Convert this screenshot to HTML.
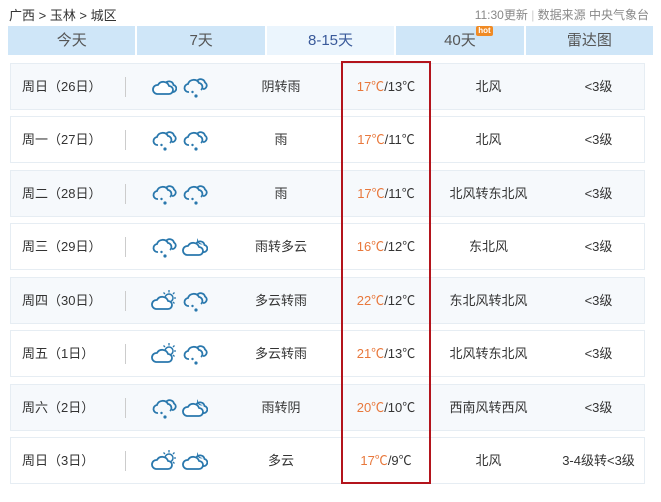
<!DOCTYPE html>
<html><head><meta charset="utf-8"><style>
*{margin:0;padding:0;box-sizing:border-box}
body{width:661px;height:502px;background:#fff;font-family:"Liberation Sans","Noto Sans CJK SC",sans-serif;color:#333;position:relative;overflow:hidden}
.crumb{position:absolute;left:9px;top:5px;font-size:13px;color:#333}
.src{position:absolute;right:12px;top:6px;font-size:12px;color:#888}
.tabs{position:absolute;left:8px;top:26px;height:29px;display:flex;width:645px}
.tab{flex:1;background:#cfe6f8;margin-right:2px;text-align:center;font-size:15px;line-height:29px;color:#555;position:relative}
.tab:last-child{margin-right:0}
.tab.on{background:#ebf5fd;color:#3a5a9a}
.hot{position:absolute;left:80px;top:0px;background:#f08a24;color:#fff;font-size:8px;line-height:10px;padding:0 2px;border-radius:2px;font-weight:bold;font-style:normal}
.row{position:absolute;left:10px;width:635px;height:47px;border:1px solid #e6edf3;background:#f6f9fc;font-size:13px}
.row span{position:absolute;top:0;line-height:45px}
.d{left:11px}
.sep{left:114px;top:13px!important;width:1px;height:20px;background:#ccc}
.ic{position:absolute;top:11px}
.w{left:205px;width:130px;text-align:center}
.t{left:320px;width:110px;text-align:center}
.t b{font-weight:normal;color:#e8783c}
.f{left:420px;width:115px;text-align:center}
.l{left:530px;width:115px;text-align:center}
.box{position:absolute;left:341px;top:61px;width:90px;height:423px;border:2px solid #b3141c}
</style></head><body>
<svg width="0" height="0" style="position:absolute">
<defs>
<symbol id="cl" viewBox="0 0 26 22"><path d="M14 9A4.5 4.5 0 0 1 22.5 10A3.5 3.5 0 0 1 21 17" fill="none" stroke="#2a78ad" stroke-width="1.8"/><path d="M6 19H18A4 4 0 0 0 18 11A6 6 0 0 0 7 10A4.5 4.5 0 0 0 6 19Z" fill="#fff" stroke="#2a78ad" stroke-width="1.8" stroke-linejoin="round"/></symbol>
<symbol id="rn" viewBox="0 0 26 24"><path d="M15 6A4.5 4.5 0 0 1 23 7.5A3.5 3.5 0 0 1 21 14" fill="none" stroke="#2a78ad" stroke-width="1.8"/><path d="M7 17A4 4 0 0 1 6 9A6 6 0 0 1 17 8A4 4 0 0 1 19 15" fill="none" stroke="#2a78ad" stroke-width="1.8"/><circle cx="10.5" cy="17" r="1.2" fill="#2a78ad"/><circle cx="14" cy="21" r="1.6" fill="#2a78ad"/></symbol>
<symbol id="sn" viewBox="0 0 26 22"><circle cx="18" cy="9" r="4" fill="none" stroke="#2a78ad" stroke-width="1.5"/><path d="M18 1v2.5M25 9h-2M23.5 3.5l-1.5 1.5M23.5 14.5l-1.5-1.5M12.5 3.5l1.5 1.5" stroke="#2a78ad" stroke-width="1.3"/><path d="M5 20H17A4 4 0 0 0 17 12A6 6 0 0 0 6 11A4.5 4.5 0 0 0 5 20Z" fill="#fff" stroke="#2a78ad" stroke-width="1.8" stroke-linejoin="round"/></symbol>
<symbol id="mn" viewBox="0 0 26 22"><path d="M14 9A4.5 4.5 0 0 1 22.5 10A3.5 3.5 0 0 1 21 17" fill="none" stroke="#2a78ad" stroke-width="1.8"/><path d="M16 3a4 4 0 0 0 5 6a5 5 0 0 1-5-6z" fill="#2a78ad"/><path d="M5 20H17A4 4 0 0 0 17 12A6 6 0 0 0 6 11A4.5 4.5 0 0 0 5 20Z" fill="#fff" stroke="#2a78ad" stroke-width="1.8" stroke-linejoin="round"/></symbol>
</defs></svg>
<div class="crumb">广西 &gt; 玉林 &gt; 城区</div>
<div class="src">11:30更新 <span style="color:#ccc">|</span> 数据来源 中央气象台</div>
<div class="tabs"><div class="tab">今天</div><div class="tab">7天</div><div class="tab on">8-15天</div><div class="tab">40天<i class="hot">hot</i></div><div class="tab">雷达图</div></div>

<div class="row" style="top:63px"><span class="d">周日（26日）</span><span class="sep"></span><svg class="ic" style="left:140px" width="26" height="22"><use href="#cl"/></svg><svg class="ic" style="left:171px" width="26" height="24"><use href="#rn"/></svg><span class="w">阴转雨</span><span class="t"><b>17℃</b>/13℃</span><span class="f">北风</span><span class="l">&lt;3级</span></div>
<div class="row" style="top:116px;background:#fff"><span class="d">周一（27日）</span><span class="sep"></span><svg class="ic" style="left:140px" width="26" height="24"><use href="#rn"/></svg><svg class="ic" style="left:171px" width="26" height="24"><use href="#rn"/></svg><span class="w">雨</span><span class="t"><b>17℃</b>/11℃</span><span class="f">北风</span><span class="l">&lt;3级</span></div>
<div class="row" style="top:170px"><span class="d">周二（28日）</span><span class="sep"></span><svg class="ic" style="left:140px" width="26" height="24"><use href="#rn"/></svg><svg class="ic" style="left:171px" width="26" height="24"><use href="#rn"/></svg><span class="w">雨</span><span class="t"><b>17℃</b>/11℃</span><span class="f">北风转东北风</span><span class="l">&lt;3级</span></div>
<div class="row" style="top:223px;background:#fff"><span class="d">周三（29日）</span><span class="sep"></span><svg class="ic" style="left:140px" width="26" height="24"><use href="#rn"/></svg><svg class="ic" style="left:171px" width="26" height="22"><use href="#mn"/></svg><span class="w">雨转多云</span><span class="t"><b>16℃</b>/12℃</span><span class="f">东北风</span><span class="l">&lt;3级</span></div>
<div class="row" style="top:277px"><span class="d">周四（30日）</span><span class="sep"></span><svg class="ic" style="left:140px" width="26" height="22"><use href="#sn"/></svg><svg class="ic" style="left:171px" width="26" height="24"><use href="#rn"/></svg><span class="w">多云转雨</span><span class="t"><b>22℃</b>/12℃</span><span class="f">东北风转北风</span><span class="l">&lt;3级</span></div>
<div class="row" style="top:330px;background:#fff"><span class="d">周五（1日）</span><span class="sep"></span><svg class="ic" style="left:140px" width="26" height="22"><use href="#sn"/></svg><svg class="ic" style="left:171px" width="26" height="24"><use href="#rn"/></svg><span class="w">多云转雨</span><span class="t"><b>21℃</b>/13℃</span><span class="f">北风转东北风</span><span class="l">&lt;3级</span></div>
<div class="row" style="top:384px"><span class="d">周六（2日）</span><span class="sep"></span><svg class="ic" style="left:140px" width="26" height="24"><use href="#rn"/></svg><svg class="ic" style="left:171px" width="26" height="22"><use href="#mn"/></svg><span class="w">雨转阴</span><span class="t"><b>20℃</b>/10℃</span><span class="f">西南风转西风</span><span class="l">&lt;3级</span></div>
<div class="row" style="top:437px;background:#fff"><span class="d">周日（3日）</span><span class="sep"></span><svg class="ic" style="left:140px" width="26" height="22"><use href="#sn"/></svg><svg class="ic" style="left:171px" width="26" height="22"><use href="#mn"/></svg><span class="w">多云</span><span class="t"><b>17℃</b>/9℃</span><span class="f">北风</span><span class="l">3-4级转&lt;3级</span></div>
<div class="box"></div>
</body></html>
